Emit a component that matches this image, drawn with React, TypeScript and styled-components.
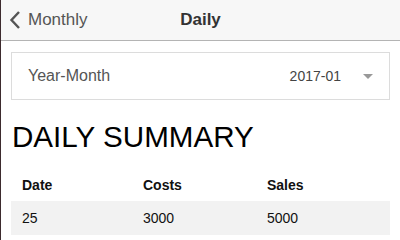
import React, { FC } from "react";
import styled, { createGlobalStyle } from "styled-components";

const GlobalStyle = createGlobalStyle`
  html, body {
    margin: 0;
    padding: 0;
    background: #fff;
  }
  body {
    font-family: "Liberation Sans", Arial, sans-serif;
    border-left: 1px solid #3d2b2e;
    height: 240px;
    box-sizing: border-box;
    overflow: hidden;
  }
`;

const NavBar = styled.div`
  position: relative;
  height: 40px;
  background: #f7f7f7;
  border-bottom: 1px solid #b4b4b4;
  display: flex;
  align-items: center;
  justify-content: center;
  .back {
    position: absolute;
    left: 8px;
    top: 0;
    height: 40px;
    display: flex;
    align-items: center;
    gap: 7px;
    color: #555;
    font-size: 17px;
  }
  .title {
    color: #333;
    font-size: 17px;
    font-weight: bold;
  }
`;

const Content = styled.div`
  padding: 11px 10px 0 10px;
`;

const Select = styled.div`
  height: 46px;
  border: 1px solid #dcdcdc;
  display: flex;
  align-items: center;
  padding: 0 16px 0 16px;
  color: #555;
  font-size: 16px;
  .label {
    flex: 1;
  }
  .value {
    color: #444;
    font-size: 14px;
    margin-right: 22px;
  }
  .caret {
    width: 0;
    height: 0;
    border-left: 5px solid transparent;
    border-right: 5px solid transparent;
    border-top: 5px solid #999;
    margin-top: 1px;
  }
`;

const Heading = styled.h1`
  margin: 20px 0 0 1px;
  font-size: 29.6px;
  font-weight: normal;
  color: #000;
  line-height: 34px;
`;

const Row = styled.div<{ head?: boolean; shaded?: boolean }>`
  display: grid;
  grid-template-columns: 121px 124px 1fr;
  padding-left: 11px;
  height: ${(p) => (p.head ? "33px" : "34px")};
  align-items: center;
  background: ${(p) => (p.shaded ? "#f2f2f2" : "transparent")};
  font-size: 14px;
  font-weight: ${(p) => (p.head ? "bold" : "normal")};
  color: #111;
`;

const Table = styled.div`
  margin-top: 14px;
`;

const Chevron: FC = () => (
  <svg width="12" height="20" viewBox="0 0 12 20">
    <path d="M10 2 L2.5 10 L10 18" fill="none" stroke="#555" strokeWidth="2.4" />
  </svg>
);

const rows = [{ date: "25", costs: "3000", sales: "5000" }];

const App: FC = () => {
  return (
    <>
      <GlobalStyle />
      <NavBar>
        <div className="back">
          <Chevron />
          <span>Monthly</span>
        </div>
        <span className="title">Daily</span>
      </NavBar>
      <Content>
        <Select>
          <span className="label">Year-Month</span>
          <span className="value">2017-01</span>
          <span className="caret" />
        </Select>
        <Heading>DAILY SUMMARY</Heading>
        <Table>
          <Row head>
            <span>Date</span>
            <span>Costs</span>
            <span>Sales</span>
          </Row>
          {rows.map((r) => (
            <Row key={r.date} shaded>
              <span>{r.date}</span>
              <span>{r.costs}</span>
              <span>{r.sales}</span>
            </Row>
          ))}
        </Table>
      </Content>
    </>
  );
};

export default App;
